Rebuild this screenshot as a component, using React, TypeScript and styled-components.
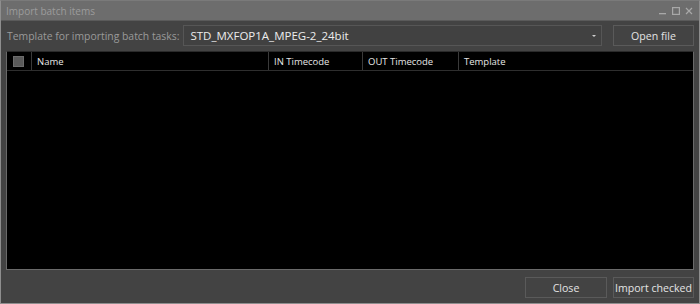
import React from "react";
import styled, { createGlobalStyle } from "styled-components";

const Global = createGlobalStyle`
  html, body { margin: 0; padding: 0; background: #434343; }
  body { font-family: "Open Sans", "Noto Sans", sans-serif; }
`;

const Window = styled.div`
  width: 700px;
  height: 304px;
  box-sizing: border-box;
  border: 1px solid #8e8e8e;
  border-top-color: #7a7a7a;
  background: #434343;
  display: flex;
  flex-direction: column;
  overflow: hidden;
`;

const TitleBar = styled.div`
  height: 19px;
  flex: none;
  background: #6d6d6d;
  border-bottom: 1px solid #5a5a5a;
  display: flex;
  align-items: center;
  padding: 0 6px 0 5px;
  color: #9c9c9c;
  font-size: 10px;
`;

const Title = styled.div`
  flex: 1;
`;

const Controls = styled.div`
  display: flex;
  align-items: center;
  gap: 5px;
  color: #a6a6a6;
`;

const Body = styled.div`
  flex: 1;
  display: flex;
  flex-direction: column;
  padding: 4px 5px 5px 5px;
  min-height: 0;
`;

const TopRow = styled.div`
  display: flex;
  align-items: center;
  height: 21px;
  gap: 4px;
`;

const Label = styled.div`
  color: #9a9a9a;
  font-size: 10.4px;
  padding-left: 1px;
  white-space: nowrap;
`;

const Combo = styled.div`
  flex: 1;
  height: 21px;
  box-sizing: border-box;
  border: 1px solid #565656;
  background: #414141;
  display: flex;
  align-items: center;
  padding: 0 5px 0 6px;
  color: #ececec;
  font-size: 11.5px;
  margin-right: 7px;
`;

const ComboText = styled.div`
  flex: 1;
`;

const Arrow = styled.div`
  width: 0;
  height: 0;
  border-left: 2px solid transparent;
  border-right: 2px solid transparent;
  border-top: 2px solid #cfcfcf;
`;

const Button = styled.div<{ $w?: number }>`
  width: ${(p) => p.$w ?? 82}px;
  height: 21px;
  box-sizing: border-box;
  border: 1px solid #5a5a5a;
  background: #434343;
  color: #e4e4e4;
  font-size: 10.6px;
  display: flex;
  align-items: center;
  justify-content: center;
  white-space: nowrap;
`;

const Table = styled.div`
  flex: 1;
  margin-top: 5px;
  border: 1px solid #6a6a6a;
  border-top-color: #2a2a2a;
  background: #000;
  display: flex;
  flex-direction: column;
`;

const HeaderRow = styled.div`
  height: 18px;
  display: flex;
  border-bottom: 1px solid #2e2e2e;
  color: #e6e6e6;
  font-size: 9.5px;
`;

const HeaderCell = styled.div<{ $w?: number }>`
  ${(p) => (p.$w ? `width: ${p.$w}px; flex: none;` : "flex: 1;")}
  box-sizing: border-box;
  display: flex;
  align-items: center;
  padding-left: 5px;
  border-right: 1px solid #3a3a3a;
  &:last-child { border-right: none; }
`;

const Check = styled.div`
  width: 9px;
  height: 9px;
  background: #5a5a5a;
  border: 1px solid #6c6c6c;
  margin-left: 1px;
`;

const Footer = styled.div`
  display: flex;
  justify-content: flex-end;
  gap: 6px;
  margin-top: 7px;
`;

export default function App() {
  return (
    <>
      <Global />
      <Window>
        <TitleBar>
          <Title>Import batch items</Title>
          <Controls>
            <svg width="8" height="8" viewBox="0 0 8 8">
              <rect x="0" y="6" width="7" height="1.3" fill="#a8a8a8" />
            </svg>
            <svg width="8" height="8" viewBox="0 0 8 8">
              <rect x="0.6" y="0.6" width="6.8" height="6.8" fill="none" stroke="#a8a8a8" strokeWidth="1.2" />
            </svg>
            <svg width="8" height="8" viewBox="0 0 8 8">
              <path d="M1 1 L7 7 M7 1 L1 7" stroke="#a8a8a8" strokeWidth="1.2" />
            </svg>
          </Controls>
        </TitleBar>
        <Body>
          <TopRow>
            <Label>Template for importing batch tasks:</Label>
            <Combo>
              <ComboText>STD_MXFOP1A_MPEG-2_24bit</ComboText>
              <Arrow />
            </Combo>
            <Button $w={81}>Open file</Button>
          </TopRow>
          <Table>
            <HeaderRow>
              <HeaderCell $w={25}>
                <Check />
              </HeaderCell>
              <HeaderCell $w={237}>Name</HeaderCell>
              <HeaderCell $w={94}>IN Timecode</HeaderCell>
              <HeaderCell $w={96}>OUT Timecode</HeaderCell>
              <HeaderCell>Template</HeaderCell>
            </HeaderRow>
          </Table>
          <Footer>
            <Button $w={82}>Close</Button>
            <Button $w={81}>Import checked</Button>
          </Footer>
        </Body>
      </Window>
    </>
  );
}
